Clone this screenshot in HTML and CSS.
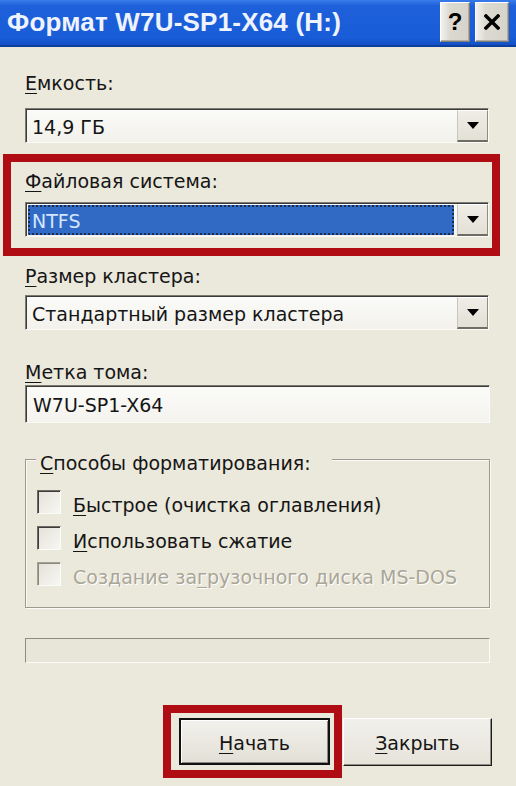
FILE: index.html
```html
<!DOCTYPE html>
<html lang="ru">
<head>
<meta charset="utf-8">
<title>Формат W7U-SP1-X64 (H:)</title>
<link rel="stylesheet" href="styles.css">
</head>
<body>
<div class="window">
  <header class="titlebar">
    <span class="title">Формат W7U-SP1-X64 (H:)</span>
    <div class="tb-buttons">
      <span class="tb-btn help">?</span>
      <span class="tb-btn close"><svg width="16" height="16" viewBox="0 0 16 16"><path d="M2 2 L14 14 M14 2 L2 14" stroke="#000" stroke-width="3.4" stroke-linecap="square"/></svg></span>
    </div>
  </header>
  <main class="content">
    <div class="label lbl-capacity"><u>Е</u>мкость:</div>
    <div class="combo c-capacity">
      <span class="value">14,9 ГБ</span>
      <span class="drop"><svg width="12" height="7" viewBox="0 0 12 7"><path d="M0 0 H12 L6 7 Z" fill="#000"/></svg></span>
    </div>
    <section class="highlight">
      <div class="label"><u>Ф</u>айловая система:</div>
      <div class="combo c-fs">
        <span class="value"><span class="sel">NTFS</span></span>
        <span class="drop"><svg width="12" height="7" viewBox="0 0 12 7"><path d="M0 0 H12 L6 7 Z" fill="#000"/></svg></span>
      </div>
    </section>
    <div class="label lbl-cluster"><u>Р</u>азмер кластера:</div>
    <div class="combo c-cluster">
      <span class="value">Стандартный размер кластера</span>
      <span class="drop"><svg width="12" height="7" viewBox="0 0 12 7"><path d="M0 0 H12 L6 7 Z" fill="#000"/></svg></span>
    </div>
    <div class="label lbl-volume"><u>М</u>етка тома:</div>
    <div class="textbox">W7U-SP1-X64</div>
    <div class="group">
      <div class="group-title"><u>С</u>пособы форматирования:</div>
      <div class="check"><span class="box"></span><span class="ctext"><u>Б</u>ыстрое (очистка оглавления)</span></div>
      <div class="check"><span class="box"></span><span class="ctext"><u>И</u>спользовать сжатие</span></div>
      <div class="check disabled"><span class="box"></span><span class="ctext">Создание за<u>г</u>рузочного диска MS-DOS</span></div>
    </div>
    <div class="progress"></div>
    <div class="actions">
      <div class="btn-highlight"><span class="btn default"><u>Н</u>ачать</span></div>
      <span class="btn close-btn"><u>З</u>акрыть</span>
    </div>
  </main>
</div>
</body>
</html>
```
FILE: styles.css
```css
* { box-sizing: border-box; }
html, body { margin: 0; padding: 0; }
body {
  width: 516px;
  height: 786px;
  overflow: hidden;
  background: #ebe8dc;
  font-family: "DejaVu Sans", "Noto Sans", sans-serif;
  font-size: 19px;
  color: #151515;
}
u { text-decoration: underline; text-underline-offset: 3px; text-decoration-thickness: 1px; }

.titlebar {
  height: 47px;
  display: flex;
  align-items: flex-start;
  padding-left: 7px;
  background: linear-gradient(#3a7bea 0px, #1d60da 6px, #195cd7 38px, #1451c6 44px);
  border-bottom: 2px solid #0e3e9c;
}
.title {
  font-family: "Liberation Sans", Arial, sans-serif;
  font-weight: bold;
  font-size: 26px;
  line-height: 45px;
  color: #eef3ff;
  letter-spacing: 0.2px;
}
.tb-buttons {
  margin-left: auto;
  display: flex;
  gap: 5px;
  padding: 2px 7px 0 0;
}
.tb-btn {
  height: 40px;
  display: flex;
  align-items: center;
  justify-content: center;
  background: linear-gradient(90deg, #f3f2ee, #dcd9d1 30%, #d6d3ca);
  border: 1px solid;
  border-color: #ffffff #7f7d76 #7f7d76 #ffffff;
  box-shadow: inset -1px -1px 0 #aeaba2;
}
.help {
  width: 30px;
  font-family: "Liberation Sans", Arial, sans-serif;
  font-weight: bold;
  font-size: 24px;
  color: #000;
}
.close { width: 34px; }

.content { padding: 0 27px 0 25px; }

.label { line-height: 22px; font-size: 19px; }
.lbl-capacity { margin-top: 25px; }
.lbl-cluster { margin-top: 9px; }
.lbl-volume { margin-top: 31px; }

.combo {
  height: 35px;
  display: flex;
  border: 1px solid;
  border-color: #7c7a71 #fbfbf8 #fbfbf8 #7c7a71;
  box-shadow: inset 1px 1px 0 #3b3b3b;
  background: linear-gradient(#fbfbf9, #f2f1ec);
}
.c-capacity { margin-top: 14px; }
.c-fs { margin-top: 10px; }
.c-cluster { margin-top: 8px; }
.combo .value {
  flex: 1;
  display: flex;
  align-items: center;
  padding: 3px 0 0 6px;
  line-height: 22px;
}
.c-fs .value { padding: 2px 3px 1px 2px; }
.sel {
  flex: 1;
  align-self: stretch;
  display: flex;
  align-items: center;
  padding: 2px 0 0 4px;
  background: #316ac5;
  color: #d4e6ff;
  outline: 2px dotted #1b2a4a;
  outline-offset: -2px;
  border-radius: 2px;
}
.drop {
  width: 31px;
  margin: 1px 0 0 0;
  display: flex;
  align-items: center;
  justify-content: center;
  background: linear-gradient(#efede6, #e3e0d6);
  border-left: 1px solid #c9c6bc;
  border-top: 1px solid #fff;
  border-bottom: 2px solid #6e6c64;
  border-right: 1px solid #8f8c83;
}

.highlight {
  margin: 11px -11px 0 -22px;
  border: 8px solid #b00c14;
  padding: 8px 3px 11px 14px;
}

.textbox {
  margin-top: 2px;
  height: 38px;
  margin-right: -1px;
  display: flex;
  align-items: center;
  padding: 1px 0 0 7px;
  line-height: 22px;
  border: 1px solid;
  border-color: #7c7a71 #fbfbf8 #fbfbf8 #7c7a71;
  box-shadow: inset 1px 1px 0 #3b3b3b;
  background: linear-gradient(#fbfbf9, #f4f3ee);
}

.group {
  margin-top: 36px;
  margin-right: -1px;
  border: 1px solid #9c9a90;
  box-shadow: 1px 1px 0 #fbfaf5, inset 1px 1px 0 #fbfaf5;
  padding: 0 0 15px 11px;
}
.group-title {
  width: fit-content;
  margin: -8px 0 10px -1px;
  padding: 0 21px 0 4px;
  background: #ebe8dc;
  line-height: 22px;
}
.check {
  height: 36px;
  display: flex;
  align-items: center;
  gap: 12px;
}
.box {
  width: 24px;
  height: 24px;
  border: 1px solid;
  border-color: #6c6a63 #fbfbf8 #fbfbf8 #6c6a63;
  box-shadow: inset 1px 1px 0 #3d3d3d;
  background: linear-gradient(135deg, #e3e1d8, #f7f7f3);
}
.ctext { line-height: 22px; padding-top: 5px; }
.disabled .ctext { color: #a9a697; text-shadow: 1px 1px 0 #ffffff; }
.disabled .box { border-color: #a3a196 #fbfbf8 #fbfbf8 #a3a196; box-shadow: inset 1px 1px 0 #8a887f; }

.progress {
  margin-top: 30px;
  margin-right: -1px;
  height: 25px;
  border: 1px solid;
  border-color: #8d8b82 #fbfbf8 #fbfbf8 #8d8b82;
  background: #e8e5d9;
}

.actions {
  margin: 42px -3px 0 0;
  display: flex;
  justify-content: flex-end;
  align-items: center;
  gap: 1px;
}
.btn-highlight {
  border: 8px solid #b00c14;
  padding: 5px 4px 5px 8px;
}
.btn {
  display: flex;
  align-items: center;
  justify-content: center;
  line-height: 22px;
  padding-top: 3px;
}
.default {
  width: 151px;
  height: 47px;
  border: 2px solid #111;
  background: linear-gradient(#f2f1ec, #e2dfd5);
  box-shadow: inset 1px 1px 0 #fff, inset -1px -1px 0 #8c8a80;
}
.close-btn {
  width: 149px;
  height: 48px;
  border: 1px solid;
  border-color: #ffffff #1c1c1c #1c1c1c #ffffff;
  background: linear-gradient(#f1f0eb, #e6e3da);
  box-shadow: inset -1px -1px 0 #908e85;
}
```
